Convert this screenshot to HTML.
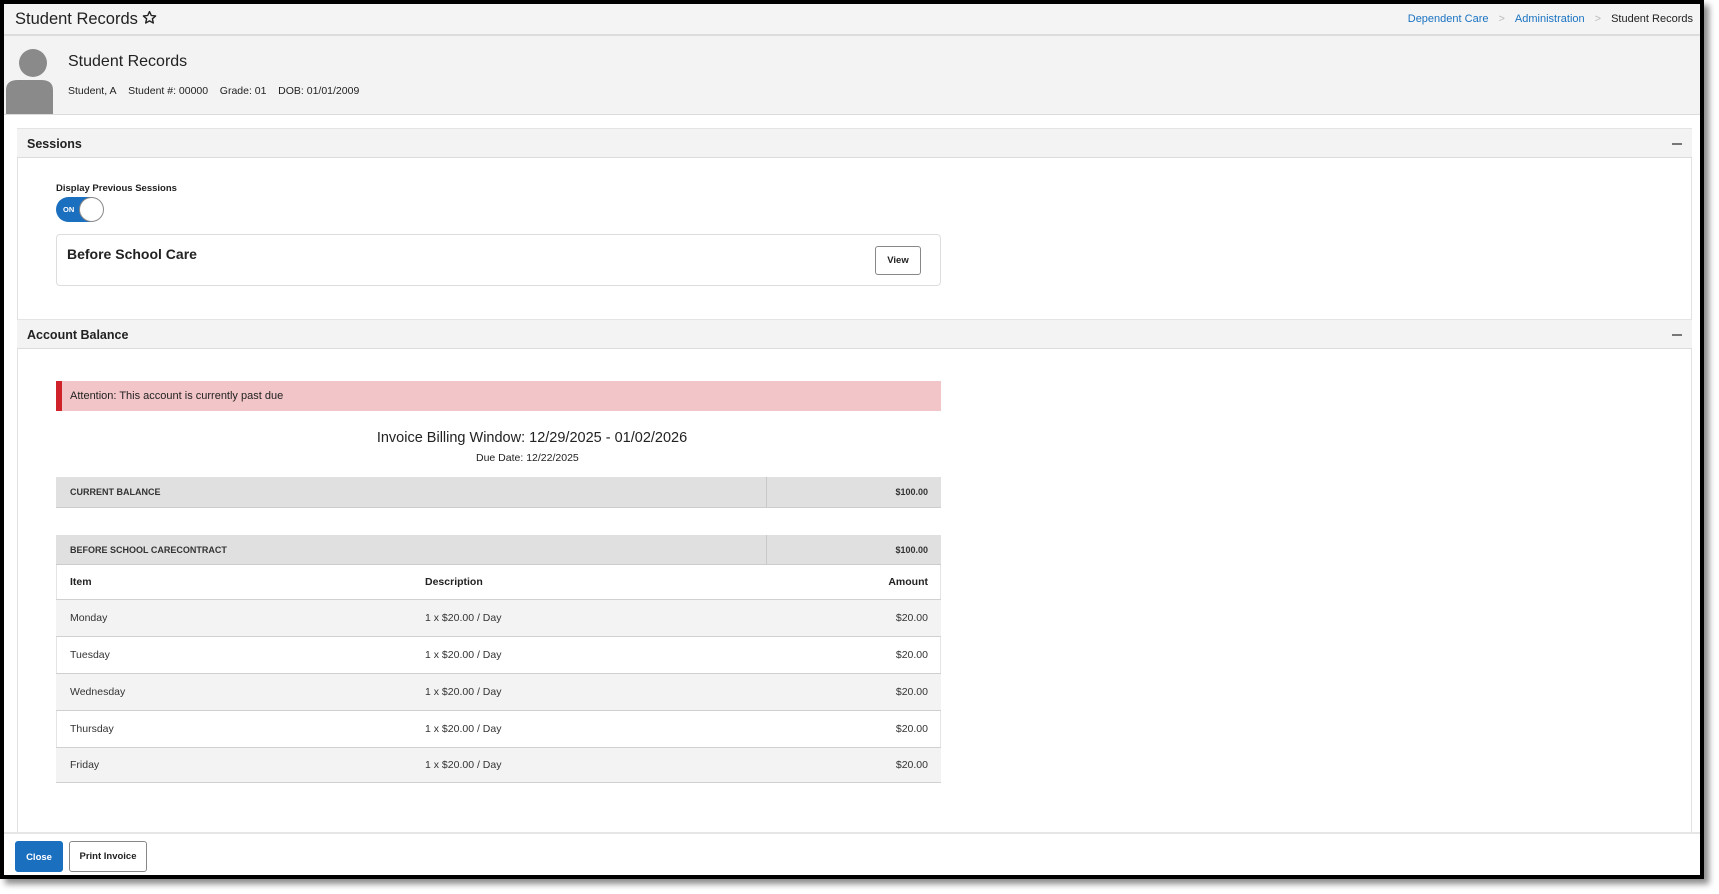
<!DOCTYPE html>
<html><head><meta charset="utf-8"><style>
*{box-sizing:border-box;margin:0;padding:0}
body{width:1719px;height:894px;background:#fff;font-family:"Liberation Sans",Arial,sans-serif;color:#222;position:relative;overflow:hidden}
.abs{position:absolute}
.frame{left:0;top:0;width:1704px;height:879px;border:4px solid #000;background:#fff;box-shadow:5px 5px 6px rgba(0,0,0,.45)}
.hdr{left:4px;top:4px;width:1696px;height:32px;background:#f4f4f4;border-bottom:2px solid #dcdcdc}
.stu{left:4px;top:36px;width:1696px;height:79px;background:#f3f3f3;border-bottom:1px solid #dcdcdc}
.panel{left:17px;width:1675px;border-left:1px solid #e2e2e2;border-right:1px solid #e2e2e2}
.ph{left:17px;width:1675px;height:30px;background:#f3f3f3;border-top:1px solid #e4e4e4;border-bottom:1px solid #dcdcdc;font-weight:bold;font-size:12.5px;padding:8px 0 0 10px}
.ph .min{position:absolute;right:10px;top:14px;width:10px;height:1.5px;background:#777}
.row{left:56px;width:885px;font-size:10.5px;color:#333}
.row span{position:absolute;top:50%;transform:translateY(-50%)}
.gray{background:#e0e0e0;border-bottom:1px solid #ccc}
.zeb{border-bottom:1px solid #d0d0d0}
.btn{border:1px solid #888;border-radius:3px;background:#fff;font-size:9.5px;font-weight:bold;text-align:center}
</style></head><body>
<div class="abs frame"></div>
<div class="abs hdr"></div>
<div class="abs" style="left:15px;top:10px;font-size:16.5px;color:#222">Student Records</div>
<svg class="abs" style="left:142px;top:10px" width="15" height="15" viewBox="0 0 24 24"><path d="M12 2.5l2.9 6.3 6.9.7-5.2 4.6 1.5 6.8L12 17.4l-6.1 3.5 1.5-6.8L2.2 9.5l6.9-.7z" fill="none" stroke="#222" stroke-width="2.2" stroke-linejoin="round"/></svg>
<div class="abs" style="right:26px;top:13px;font-size:11px;white-space:nowrap"><span style="color:#1a73c2">Dependent Care</span><span style="color:#bbb;margin:0 10px">&gt;</span><span style="color:#1a73c2">Administration</span><span style="color:#bbb;margin:0 10px">&gt;</span><span style="color:#222">Student Records</span></div>
<div class="abs stu"></div>
<svg class="abs" style="left:6px;top:48px" width="47" height="66" viewBox="0 0 47 66"><circle cx="27" cy="15" r="14" fill="#8a8a8a"/><path d="M0 66V42q0-10 12-10h23q12 0 12 10v24z" fill="#8a8a8a"/></svg>
<div class="abs" style="left:68px;top:53px;font-size:16px;color:#222">Student Records</div>
<div class="abs" style="left:68px;top:85px;font-size:10.5px;color:#222">Student, A&nbsp;&nbsp;&nbsp; Student #: 00000&nbsp;&nbsp;&nbsp; Grade: 01&nbsp;&nbsp;&nbsp; DOB: 01/01/2009</div>
<div class="abs panel" style="top:128px;height:705px"></div>
<div class="abs ph" style="top:128px">Sessions<div class="min"></div></div>
<div class="abs" style="left:56px;top:183px;font-size:9.5px;font-weight:bold">Display Previous Sessions</div>
<div class="abs" style="left:56px;top:197px;width:46px;height:25px;border-radius:13px;background:#1a6fbf"></div>
<div class="abs" style="left:63px;top:205px;font-size:7.5px;color:#fff;font-weight:bold">ON</div>
<div class="abs" style="left:79px;top:197px;width:25px;height:25px;border-radius:50%;background:#fff;border:1px solid #888"></div>
<div class="abs" style="left:56px;top:234px;width:885px;height:52px;border:1px solid #ddd;border-radius:4px"></div>
<div class="abs" style="left:67px;top:246px;font-size:14px;font-weight:bold">Before School Care</div>
<div class="abs btn" style="left:875px;top:246px;width:46px;height:29px;line-height:27px">View</div>
<div class="abs ph" style="top:319px">Account Balance<div class="min"></div></div>
<div class="abs" style="left:56px;top:381px;width:885px;height:30px;background:#f2c6c8;border-left:6px solid #d0222b;font-size:11px;padding:9px 0 0 8px">Attention: This account is currently past due</div>
<div class="abs" style="left:374px;top:430px;width:316px;text-align:center;font-size:14.5px;white-space:nowrap">Invoice Billing Window: 12/29/2025 - 01/02/2026</div>
<div class="abs" style="left:476px;top:452px;font-size:10.5px;white-space:nowrap">Due Date: 12/22/2025</div>
<div class="abs row gray" style="top:477px;height:31px;font-weight:bold;font-size:9px"><span style="left:14px">CURRENT BALANCE</span><span style="right:13px">$100.00</span><div class="abs" style="left:710px;top:0;width:1px;height:30px;background:#c8c8c8"></div></div>
<div class="abs row gray" style="top:535px;height:30px;font-weight:bold;font-size:9px"><span style="left:14px">BEFORE SCHOOL CARECONTRACT</span><span style="right:13px">$100.00</span><div class="abs" style="left:710px;top:0;width:1px;height:29px;background:#c8c8c8"></div></div>
<div class="abs" style="left:56px;top:565px;width:885px;height:218px;border-left:1px solid #e4e4e4;border-right:1px solid #e4e4e4"></div>
<div class="abs row zeb" style="top:565px;height:35px;font-weight:bold;font-size:10.5px;color:#222"><span style="left:14px">Item</span><span style="left:369px">Description</span><span style="right:13px">Amount</span></div>
<div class="abs row zeb" style="top:600px;height:37px;background:#f3f3f3"><span style="left:14px">Monday</span><span style="left:369px">1 x $20.00 / Day</span><span style="right:13px">$20.00</span></div>
<div class="abs row zeb" style="top:637px;height:37px"><span style="left:14px">Tuesday</span><span style="left:369px">1 x $20.00 / Day</span><span style="right:13px">$20.00</span></div>
<div class="abs row zeb" style="top:674px;height:37px;background:#f3f3f3"><span style="left:14px">Wednesday</span><span style="left:369px">1 x $20.00 / Day</span><span style="right:13px">$20.00</span></div>
<div class="abs row zeb" style="top:711px;height:37px"><span style="left:14px">Thursday</span><span style="left:369px">1 x $20.00 / Day</span><span style="right:13px">$20.00</span></div>
<div class="abs row zeb" style="top:748px;height:35px;background:#f3f3f3"><span style="left:14px">Friday</span><span style="left:369px">1 x $20.00 / Day</span><span style="right:13px">$20.00</span></div>
<div class="abs" style="left:4px;top:832px;width:1696px;height:2px;background:#e6e6e6"></div>
<div class="abs btn" style="left:15px;top:841px;width:48px;height:31px;line-height:31px;background:#1a6fbf;border-color:#1a6fbf;color:#fff">Close</div>
<div class="abs btn" style="left:69px;top:841px;width:78px;height:31px;line-height:29px">Print Invoice</div>
</body></html>
